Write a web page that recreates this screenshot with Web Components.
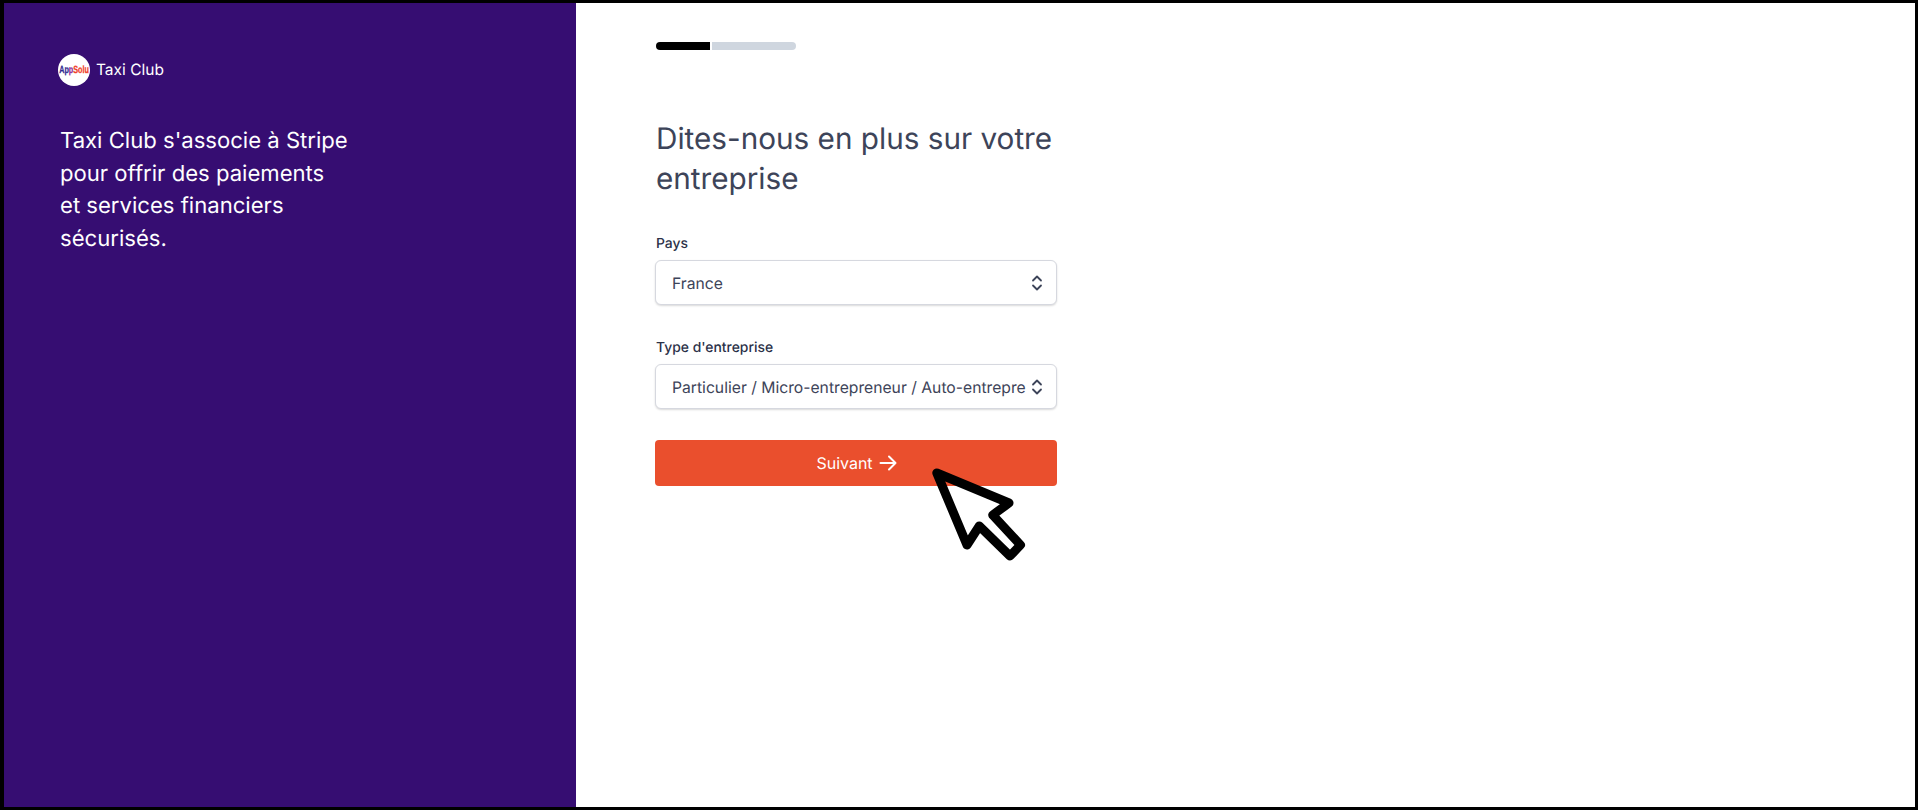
<!DOCTYPE html>
<html lang="fr">
<head>
<meta charset="utf-8">
<title>Taxi Club</title>
<style>
  html, body { margin: 0; height: 100%; background: #fff; }
  body { font-family: Inter, "Liberation Sans", sans-serif; text-rendering: geometricPrecision; }
</style>
</head>
<body>
<onboarding-page>
  <brand-panel slot="side" name="Taxi Club">Taxi Club s'associe à Stripe<br>pour offrir des paiements<br>et services financiers<br>sécurisés.</brand-panel>
  <step-progress slot="progress"></step-progress>
  <h1 slot="title">Dites-nous en plus sur votre entreprise</h1>
  <select-field label="Pays" value="France"></select-field>
  <select-field label="Type d'entreprise" value="Particulier / Micro-entrepreneur / Auto-entrepre"></select-field>
  <next-button>Suivant</next-button>
  <big-cursor slot="overlay"></big-cursor>
</onboarding-page>

<script>
class OnboardingPage extends HTMLElement {
  constructor() {
    super()
    this.attachShadow({mode: "open"}).innerHTML = `
      <style>
        :host {
          display: flex;
          box-sizing: border-box;
          height: 810px;
          position: relative;
          border-style: solid;
          border-color: #000;
          border-width: 3px 3px 3px 4px;
          overflow: hidden;
          background: #fff;
        }
        .side { flex: 0 0 572px; display: flex; }
        main {
          flex: 1;
          padding: 39px 0 0 79px;
          box-sizing: border-box;
        }
        .form { width: 402px; display: flex; flex-direction: column; }
        ::slotted(h1) {
          margin: 69px 0 34px 1px;
          font: 400 29.7px/40px Inter, "Liberation Sans", sans-serif;
          color: #3d4459;
        }
      </style>
      <div class="side"><slot name="side"></slot></div>
      <main>
        <div class="form">
          <slot name="progress"></slot>
          <slot name="title"></slot>
          <slot></slot>
        </div>
      </main>
      <slot name="overlay"></slot>
    `
  }
}

class BrandPanel extends HTMLElement {
  constructor() {
    super()
    this.attachShadow({mode: "open"}).innerHTML = `
      <style>
        :host {
          display: block;
          flex: 1;
          background: #360d72;
          color: #fff;
          padding: 51px 0 0 54px;
          box-sizing: border-box;
        }
        .brand { display: flex; align-items: center; gap: 6px; font-size: 15.5px; line-height: 32px; }
        .logo {
          width: 32px; height: 32px;
          border-radius: 50%;
          background: #fff;
          display: flex; align-items: center; justify-content: center;
          overflow: hidden;
        }
        .logo div {
          font: 700 7.2px/1 "Liberation Sans", sans-serif;
          transform: scaleY(1.45);
          -webkit-text-stroke: .2px currentColor;
          white-space: nowrap;
          color: #f0402a;
        }
        .logo b { font-weight: 700; color: #2f2a8f; }
        .logo i { font-style: normal; color: #8d2a9c; }
        p { margin: 39px 0 0 2px; font-size: 22.1px; line-height: 32.5px; font-weight: 400; }
      </style>
      <div class="brand">
        <div class="logo"><div><b>Ap</b><i>p</i>Solu</div></div>
        <div class="name"></div>
      </div>
      <p><slot></slot></p>
    `
    this.shadowRoot.querySelector(".name").textContent = this.getAttribute("name")
  }
}

class StepProgress extends HTMLElement {
  constructor() {
    super()
    this.attachShadow({mode: "open"}).innerHTML = `
      <style>
        :host { display: flex; gap: 2px; width: 140px; height: 8px; margin-left: 1px; }
        .done { width: 54px; background: #000; border-radius: 4px 0 0 4px; }
        .todo { flex: 1; background: #cfd6df; border-radius: 0 4px 4px 0; }
      </style>
      <div class="done"></div><div class="todo"></div>
    `
  }
}

class SelectField extends HTMLElement {
  constructor() {
    super()
    this.attachShadow({mode: "open"}).innerHTML = `
      <style>
        :host { display: block; margin-bottom: 32px; }
        label {
          display: block;
          margin: 1px 0 6px 1px;
          font-size: 13.9px; line-height: 20px; font-weight: 450;
          color: #2b3148;
        }
        .box {
          box-sizing: border-box;
          height: 45px;
          display: flex; align-items: center;
          background: #fff;
          border: 1px solid #d6d8df;
          border-radius: 6px;
          box-shadow: 0 1px 2px rgba(0,0,0,.15);
          padding: 0 11px 0 16px;
          font-size: 15.7px;
          color: #3d4459;
        }
        .value { flex: 1; white-space: nowrap; min-width: 0; padding-top: 1px; }
        svg { flex: none; margin-left: 4px; }
      </style>
      <label></label>
      <div class="box">
        <div class="value"></div>
        <svg width="16" height="20" viewBox="0 0 16 20" fill="none" stroke="#3d4459" stroke-width="1.8" stroke-linecap="round" stroke-linejoin="round">
          <path d="M4 7.5 8 3.5l4 4M4 12.5l4 4 4-4"/>
        </svg>
      </div>
    `
    this.shadowRoot.querySelector("label").textContent = this.getAttribute("label")
    this.shadowRoot.querySelector(".value").textContent = this.getAttribute("value")
  }
}

class NextButton extends HTMLElement {
  constructor() {
    super()
    this.attachShadow({mode: "open"}).innerHTML = `
      <style>
        :host {
          display: flex; align-items: center; justify-content: center; gap: 6px;
          height: 46px;
          margin-top: -1px;
          padding-left: 1px;
          background: #ea4f2d;
          border-radius: 4px;
          color: #fff;
          font-size: 16px;
        }
      </style>
      <slot></slot>
      <svg width="18" height="16" viewBox="0 0 18 16" fill="none" stroke="#fff" stroke-width="2" stroke-linecap="round" stroke-linejoin="round">
        <path d="M1.5 8h15M10 1.5 16.5 8 10 14.5"/>
      </svg>
    `
  }
}

class BigCursor extends HTMLElement {
  constructor() {
    super()
    this.attachShadow({mode: "open"}).innerHTML = `
      <style>
        :host { position: absolute; left: 926px; top: 462px; width: 100px; height: 100px; }
        svg { display: block; }
      </style>
      <svg width="100" height="100" viewBox="0 0 100 100">
        <path d="M6.8 8 79 38 62.7 50 90.5 80 80 91 49.3 61 37 80Z" fill="none" stroke="#000" stroke-width="9" stroke-linejoin="round"/>
      </svg>
    `
  }
}

customElements.define("onboarding-page", OnboardingPage)
customElements.define("brand-panel", BrandPanel)
customElements.define("step-progress", StepProgress)
customElements.define("select-field", SelectField)
customElements.define("next-button", NextButton)
customElements.define("big-cursor", BigCursor)
</script>
</body>
</html>
